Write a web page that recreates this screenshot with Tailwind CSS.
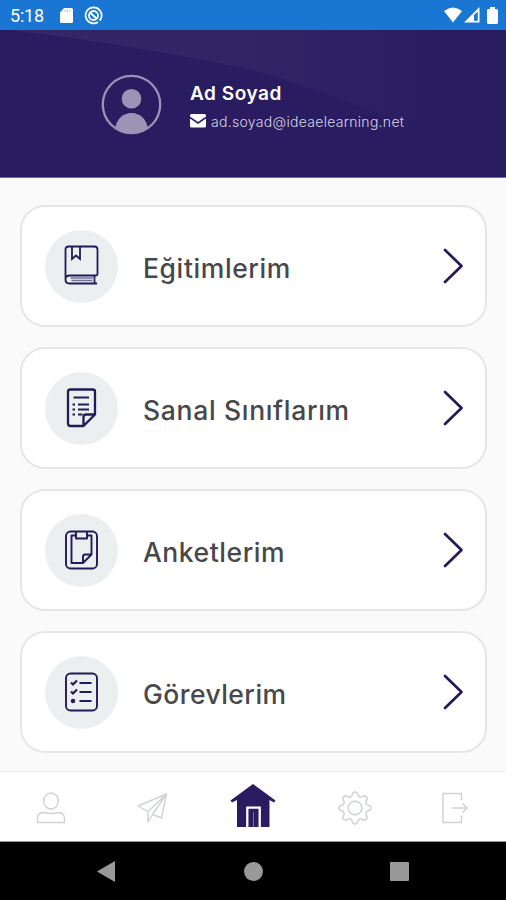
<!DOCTYPE html>
<html lang="tr">
<head>
<meta charset="utf-8">
<title>Ana Sayfa</title>
<script src="https://cdn.jsdelivr.net/npm/@tailwindcss/browser@4"></script>
</head>
<body class="w-[506px] h-[900px] overflow-hidden bg-[#fafafa] font-['Inter','Open_Sans',sans-serif] flex flex-col">
<div class="h-[30px] shrink-0 bg-[#1976d2] flex items-center text-white">
  <span class="w-[59px] pl-[10px] pt-px text-[18px] leading-[30px] font-['Roboto',sans-serif] tracking-[-0.2px] whitespace-nowrap">5:18</span>
  <svg class="w-[14px] h-[17px]" viewBox="0 0 14 17"><path fill="#fff" d="M5 1H12.500Q14 1 14 2.500V14.500Q14 16 12.500 16H2.500Q1 16 1 14.500V5.500Z"/><path stroke="#1976d2" stroke-opacity=".4" stroke-width="1" d="M6 2.500v2.500M8.500 2.500v2.500M11 2.500v2.500"/></svg>
  <svg class="ml-[11px] w-[19px] h-[19px]" viewBox="0 0 19 19" fill="none" stroke="#fff"><path stroke-width="1.700" d="M14 16A8 8 0 1 1 17.300 11.500Q16.800 13.500 15.500 14.500"/><circle cx="9.500" cy="9.500" r="4.500" stroke-width="1.800"/><path stroke-width="2" d="M6 6.500l6.500 6"/></svg>
  <svg class="ml-auto w-[18px] h-[16px]" viewBox="0 0 18 16"><path fill="#fff" d="M0 4Q9-3 18 4L9 15.500Z"/></svg>
  <svg class="ml-[2px] w-[16px] h-[16px]" viewBox="0 0 16 16"><path fill="#fff" fill-rule="evenodd" d="M15.500 0V15.500H0ZM13.800 4.500L10 8V13.800H13.800Z"/></svg>
  <svg class="ml-[7px] mr-[8px] w-[11px] h-[17px]" viewBox="0 0 11 17"><path fill="#fff" d="M3 0H8V2H9.500Q11 2 11 3.500V15.500Q11 17 9.500 17H1.500Q0 17 0 15.500V3.500Q0 2 1.500 2H3Z"/></svg>
</div>
<header class="relative h-[148px] shrink-0 bg-[#291c60] border-b border-[#756c96] flex">
  <svg class="absolute inset-0 w-[506px] h-[147px]" viewBox="0 0 506 147">
    <defs><linearGradient id="sheen" x1="0" x2="1"><stop offset="0" stop-color="#342766"/><stop offset=".45" stop-color="#322565"/><stop offset=".9" stop-color="#291c60"/></linearGradient></defs>
    <path fill="url(#sheen)" d="M10 0Q130 14 253 40Q370 74 480 130L506 147V0Z"/>
  </svg>
  <svg class="relative ml-[101px] mt-[44px] w-[61px] h-[61px] shrink-0" viewBox="0 0 61 61"><defs><clipPath id="face"><circle cx="30.500" cy="30.500" r="29"/></clipPath></defs><circle cx="30.500" cy="30.500" r="28.700" fill="none" stroke="#9c94b5" stroke-width="2.300"/><circle cx="30.500" cy="24.700" r="9.800" fill="#9c94b5"/><path clip-path="url(#face)" fill="#9c94b5" d="M13 61C14 45 22 39 30.500 39S47 45 48 61Z"/></svg>
  <div class="relative ml-[28px] mt-[51px] text-white whitespace-nowrap">
    <div class="text-[19px] leading-[26px] font-semibold tracking-[0.55px]">Ad Soyad</div>
    <div class="flex items-center mt-[3px] text-[14px] leading-[22px] text-[#d8d4e2] font-light">
      <svg class="w-[16px] h-[14px] mr-[5px] -mt-[2px]" viewBox="0 0 16 14"><path fill="#fff" d="M1.500 0h13Q16 0 16 1.500V2.500L8 8 0 2.500V1.500Q0 0 1.500 0ZM0 4.500L8 10l8-5.500V12Q16 13.500 14.500 13.500h-13Q0 13.500 0 12Z"/></svg>
      <span class="mt-px tracking-[0.3px]">ad.soyad@ideaelearning.net</span>
    </div>
  </div>
</header>
<main class="h-[593px] shrink-0 px-[20px] pt-[27px] flex flex-col gap-[20px]">
  <section class="w-[467px] h-[122px] shrink-0 rounded-[25px] border-2 border-[#e5e7e7] bg-white flex items-center pl-[23px] pr-[21px]">
    <div class="w-[73px] h-[73px] rounded-full bg-[#ebefef] flex items-center justify-center">
      <svg class="w-[36px] h-[42px]" viewBox="0.500 0.500 36 42" fill="none" stroke="#251957" stroke-width="1.800"><path d="M2 36V5Q2 2 5 2H31Q34 2 34 5V29.500Q34 31 32 31H6Q2 31 2 35T6 39H33.500"/><path d="M8.500 2V14.500L12.500 11l4 3.500V2M31 31v8"/><path stroke-width="1.300" d="M7 33.500H31M8 36H29" stroke="#77709a"/></svg>
    </div>
    <h2 class="ml-[25px] mt-[5px] text-[26.500px] tracking-[0.6px] text-[#48484a] font-medium whitespace-nowrap">Eğitimlerim</h2>
    <svg class="ml-auto w-[22px] h-[38px]" viewBox="0 0 22 38" fill="none" stroke="#251957" stroke-width="2.700" stroke-linecap="round" stroke-linejoin="round"><path d="M3 3L19.500 19 3 35"/></svg>
  </section>
  <section class="w-[467px] h-[122px] shrink-0 rounded-[25px] border-2 border-[#e5e7e7] bg-white flex items-center pl-[23px] pr-[21px]">
    <div class="w-[73px] h-[73px] rounded-full bg-[#ebefef] flex items-center justify-center">
      <svg class="w-[32px] h-[40px]" viewBox="0.500 0 32 40" fill="none" stroke="#251957" stroke-width="2.300" stroke-linejoin="round"><path d="M17.500 38H5Q2.500 38 2.500 35.500V3.500Q2.500 1.500 5 1.500H27Q29.500 1.500 29.500 3.500V26.500L18 38V29Q18 26.500 20.500 26.500H29"/><path stroke-width="2" d="M8 9.500H23.500M12.500 16.500H23.500M12.500 21.500H23.500M12.500 26.500H17M7 16.500h2.500M7 21.500h2.500M7 26.500h2.500"/></svg>
    </div>
    <h2 class="ml-[25px] mt-[5px] text-[26.500px] tracking-[0.68px] text-[#48484a] font-medium whitespace-nowrap">Sanal Sınıflarım</h2>
    <svg class="ml-auto w-[22px] h-[38px]" viewBox="0 0 22 38" fill="none" stroke="#251957" stroke-width="2.700" stroke-linecap="round" stroke-linejoin="round"><path d="M3 3L19.500 19 3 35"/></svg>
  </section>
  <section class="w-[467px] h-[122px] shrink-0 rounded-[25px] border-2 border-[#e5e7e7] bg-white flex items-center pl-[23px] pr-[21px]">
    <div class="w-[73px] h-[73px] rounded-full bg-[#ebefef] flex items-center justify-center">
      <svg class="w-[34px] h-[40px]" viewBox="0.500 0 34 40" fill="none" stroke="#251957" stroke-width="1.900" stroke-linejoin="round"><rect x="1.500" y="1.500" width="31" height="37" rx="4.500"/><path d="M12 5.500H7V33H18.500L27 24.500V5.500H22M18.500 33V27Q18.500 24.500 20.500 24.500H27"/><path d="M11.500 2V8.500H22.500V2"/></svg>
    </div>
    <h2 class="ml-[25px] mt-[5px] text-[26.500px] tracking-[0.55px] text-[#48484a] font-medium whitespace-nowrap">Anketlerim</h2>
    <svg class="ml-auto w-[22px] h-[38px]" viewBox="0 0 22 38" fill="none" stroke="#251957" stroke-width="2.700" stroke-linecap="round" stroke-linejoin="round"><path d="M3 3L19.500 19 3 35"/></svg>
  </section>
  <section class="w-[467px] h-[122px] shrink-0 rounded-[25px] border-2 border-[#e5e7e7] bg-white flex items-center pl-[23px] pr-[21px]">
    <div class="w-[73px] h-[73px] rounded-full bg-[#ebefef] flex items-center justify-center">
      <svg class="w-[34px] h-[40px]" viewBox="0.500 0 34 40" fill="none" stroke="#251957" stroke-width="1.900"><rect x="1.500" y="1.500" width="31" height="37" rx="4.500"/><path d="M15 11H27M15 20H27M15 29H27"/><path stroke-width="2.200" d="M6.500 10.500l2 2 4-4M6.500 19.500l2 2 4-4"/><circle cx="8.500" cy="29" r="1.300" fill="#251957"/></svg>
    </div>
    <h2 class="ml-[25px] mt-[5px] text-[26.500px] tracking-[0.45px] text-[#48484a] font-medium whitespace-nowrap">Görevlerim</h2>
    <svg class="ml-auto w-[22px] h-[38px]" viewBox="0 0 22 38" fill="none" stroke="#251957" stroke-width="2.700" stroke-linecap="round" stroke-linejoin="round"><path d="M3 3L19.500 19 3 35"/></svg>
  </section>
</main>
<nav class="h-[71px] shrink-0 bg-white border-t border-[#f0f0f0] border-b border-b-[#999] grid grid-cols-5 items-center justify-items-center">
  <svg class="w-[30px] h-[32px] mt-[3px]" viewBox="0 0 30 32" fill="none" stroke="#d0d3d3" stroke-width="1.400"><ellipse cx="15" cy="9" rx="7.300" ry="8"/><path d="M1.500 30.500V27Q1.500 20.800 7 20.500Q10 20.500 12 21.300Q15 22 18 21.300Q20 20.500 23 20.500Q28.500 20.800 28.500 27V30.500Z"/></svg>
  <svg class="w-[32px] h-[32px] mt-[3px]" viewBox="0 0 32 32" fill="none" stroke="#d0d3d3" stroke-width="1.400" stroke-linejoin="round"><path d="M30.500 2L2 14 12 19.500V30L16.500 22.500 25.500 26ZM30.500 2L12 19.500M30.500 2L16.500 22.500"/></svg>
  <svg class="w-[46px] h-[44px] -mt-[2px]" viewBox="0 0 46 44"><path fill="#291c60" d="M23 0L45.500 16.500 44 18.500 39.500 16V43H7V16L2 18.500 .5 16.500Z"/><path fill="none" stroke="#fff" stroke-width="2.300" d="M17.300 43V23.700H29.700V43"/><path stroke="#8d86ab" stroke-width=".8" d="M23.500 28V43"/></svg>
  <svg class="w-[36px] h-[36px] mt-[3px] ml-px" viewBox="-18 -18 36 36" fill="none" stroke="#d0d3d3" stroke-width="1.500"><circle r="6.800"/><defs><path id="cog" d="M-3.200-12.300L-2.200-15Q0-17 2.200-15L3.200-12.300Q5-10.200 6.430-10.960"/></defs><use href="#cog"/><use href="#cog" transform="rotate(45)"/><use href="#cog" transform="rotate(90)"/><use href="#cog" transform="rotate(135)"/><use href="#cog" transform="rotate(180)"/><use href="#cog" transform="rotate(225)"/><use href="#cog" transform="rotate(270)"/><use href="#cog" transform="rotate(315)"/></svg>
  <svg class="w-[26px] h-[32px] mt-[3px]" viewBox="0 0 26 32" fill="none" stroke="#d0d3d3" stroke-width="1.500"><path d="M19.500 8V1.500H1V30.500H19.500V23.500M9.500 16H25M20.500 11.500L25 16l-4.500 4.500"/></svg>
</nav>
<footer class="relative h-[58px] shrink-0 bg-black flex items-center pl-[97px]">
  <svg class="w-[18px] h-[21px]" viewBox="0 0 18 21"><path fill="#999" d="M0 10.500L18 0V21Z"/></svg>
  <div class="ml-[129px] w-[19px] h-[19px] rounded-full bg-[#999]"></div>
  <div class="ml-[127px] w-[19px] h-[19px] rounded-[1px] bg-[#999]"></div>
</footer>
</body>
</html>
